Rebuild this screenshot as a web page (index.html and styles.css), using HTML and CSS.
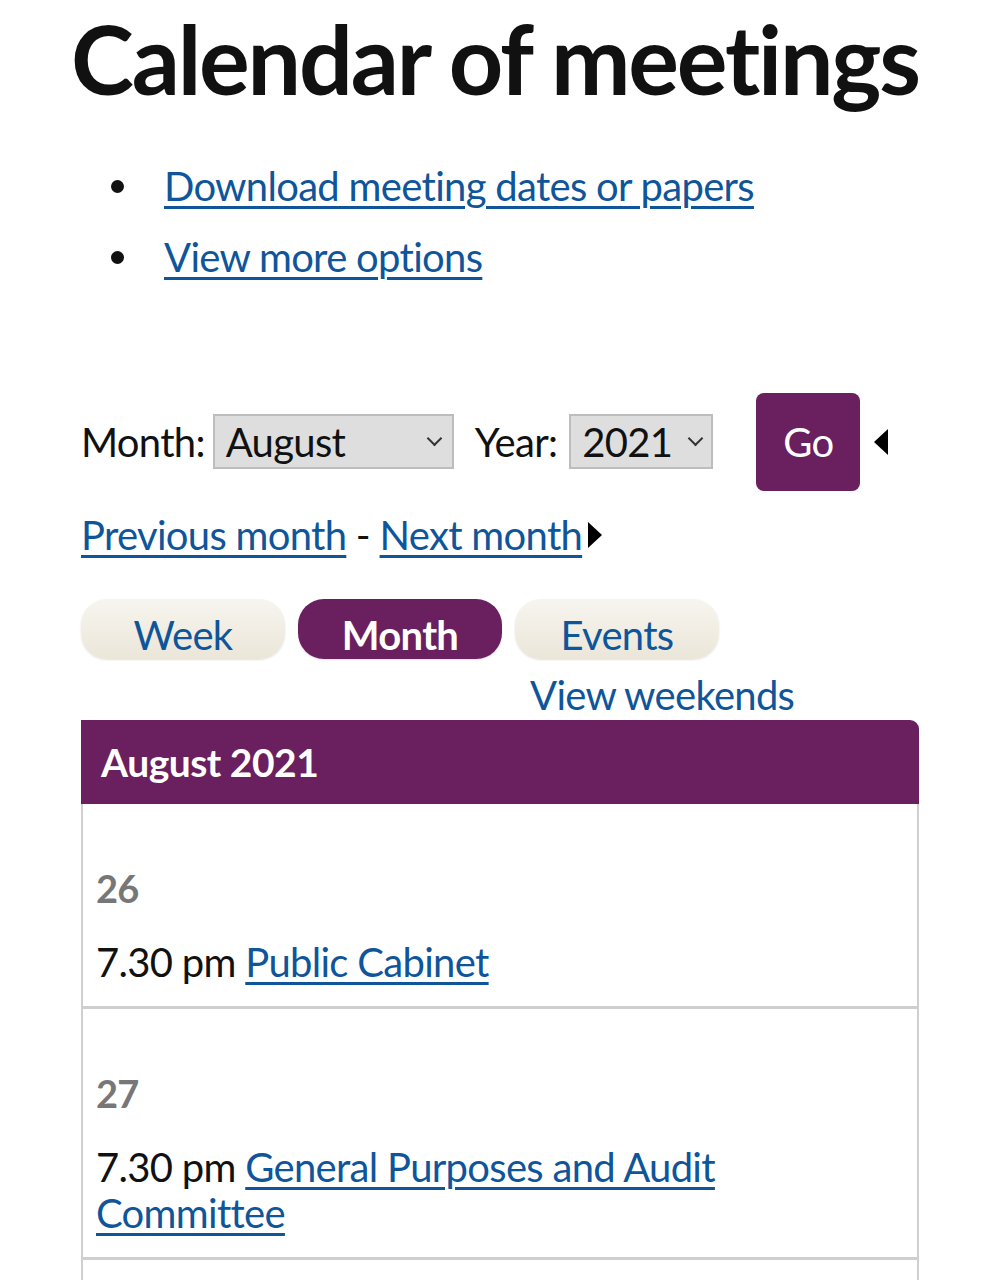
FILE: index.html
```html
<!DOCTYPE html>
<html lang="en">
<head>
<meta charset="utf-8">
<title>Calendar of meetings</title>
<link rel="stylesheet" href="styles.css">
</head>
<body>
<main class="page">
  <h1 class="title">Calendar of meetings</h1>
  <ul class="links">
    <li><a href="#">Download meeting dates or papers</a></li>
    <li><a href="#">View more options</a></li>
  </ul>

  <form class="picker">
    <label class="lbl">Month:</label>
    <span class="sel sel-month">August<span class="chev"></span></span>
    <label class="lbl lbl-year">Year:</label>
    <span class="sel sel-year">2021<span class="chev"></span></span>
    <button type="button" class="go">Go</button>
    <span class="tri-left"></span>
  </form>

  <div class="nav"><a href="#">Previous month</a> - <a href="#">Next month</a><span class="tri-right"></span></div>

  <div class="tabs">
    <a class="tab" href="#">Week</a>
    <a class="tab active" href="#">Month</a>
    <a class="tab" href="#">Events</a>
  </div>
  <div class="weekends"><a href="#">View weekends</a></div>

  <section class="cal">
    <h2 class="cal-head">August 2021</h2>
    <div class="day">
      <div class="num">26</div>
      <div class="ev">7.30 pm <a href="#">Public Cabinet</a></div>
    </div>
    <div class="day">
      <div class="num">27</div>
      <div class="ev">7.30 pm <a href="#">General Purposes and Audit Committee</a></div>
    </div>
    <div class="day"></div>
  </section>
</main>
</body>
</html>
```

FILE: styles.css
```css
html, body { margin: 0; padding: 0; background: #fff; }
body {
  font-family: Lato, "Open Sans", sans-serif;
  color: #111;
  font-size: 40px;
  letter-spacing: -0.7px;
}
a { color: #0f559a; text-decoration: underline; text-decoration-thickness: 3px; text-underline-offset: 5px; }

.page { padding: 0 81px 0 81px; }

.title {
  margin: 0 -60px 0 -10px;
  padding-top: 6px;
  font-size: 95px;
  font-weight: 700;
  line-height: 1.1;
  letter-spacing: -2.2px;
  white-space: nowrap;
  color: #111;
}

.links { margin: 40px 0 0 0; padding: 0 0 0 30px; list-style: none; }
.links li { line-height: 71px; display: flex; align-items: center; }
.links li::before {
  content: "";
  width: 13px; height: 13px;
  border-radius: 50%;
  background: #111;
  margin-right: 40px;
  flex: none;
}

.picker {
  margin-top: 100px;
  display: flex;
  align-items: center;
  height: 98px;
}
.lbl { margin-right: 8px; }
.lbl-year { margin-right: 12px; }
.sel {
  display: inline-flex;
  align-items: center;
  justify-content: space-between;
  box-sizing: border-box;
  height: 55px;
  background: #dedede;
  border: 2px solid #bdbdbd;
  padding: 0 12px 0 11px;
  color: #111;
}
.sel-month { width: 241px; margin-right: 21px; }
.sel-year { width: 144px; padding-right: 10px; margin-right: 43px; }
.chev {
  width: 9px; height: 9px;
  border-right: 2px solid #333;
  border-bottom: 2px solid #333;
  transform: rotate(45deg);
  margin-top: -6px;
}
.go {
  width: 104px; height: 98px;
  border: none;
  border-radius: 8px;
  background: #6a1f5e;
  color: #fff;
  font-family: inherit;
  font-size: 40px;
  letter-spacing: -0.7px;
  padding: 0;
}
.tri-left {
  margin-left: 14px;
  width: 0; height: 0;
  border-top: 13px solid transparent;
  border-bottom: 13px solid transparent;
  border-right: 14px solid #000;
}

.nav { margin-top: 17px; display: flex; align-items: center; line-height: 55px; white-space: pre; }
.tri-right {
  margin-left: 6px;
  width: 0; height: 0;
  border-top: 13px solid transparent;
  border-bottom: 13px solid transparent;
  border-left: 14px solid #000;
}

.tabs { margin-top: 36px; display: flex; gap: 13px; }
.tab {
  box-sizing: border-box;
  width: 204px; height: 60px;
  padding-top: 12px;
  border-radius: 26px;
  display: flex; align-items: center; justify-content: center;
  text-decoration: none;
  background: linear-gradient(#f7f5ef, #ebe6d9);
  box-shadow: 0 1px 2px rgba(0,0,0,0.12);
  color: #0f559a;
}
.tab.active { background: #6a1f5e; color: #fff; font-weight: 700; }

.weekends { margin-top: 8px; padding-left: 449px; line-height: 56px; height: 53px; }
.weekends a { text-decoration: none; }

.cal { margin-top: 0; }
.cal-head {
  margin: 0;
  height: 84px;
  box-sizing: border-box;
  padding: 0 20px;
  display: flex; align-items: center;
  background: #6a1f5e;
  color: #fff;
  font-size: 39px;
  letter-spacing: -0.5px;
  font-weight: 700;
  border-top-right-radius: 9px;
}
.day {
  border-left: 2px solid #d0d0d0;
  border-right: 2px solid #d0d0d0;
  border-bottom: 3px solid #cfcfcf;
  padding: 61px 13px 21px 13px;
}
.day:last-child { border-bottom: none; height: 40px; }
.num { font-weight: 700; color: #777; font-size: 38px; line-height: 46px; }
.ev { margin-top: 28px; line-height: 46px; }
```
